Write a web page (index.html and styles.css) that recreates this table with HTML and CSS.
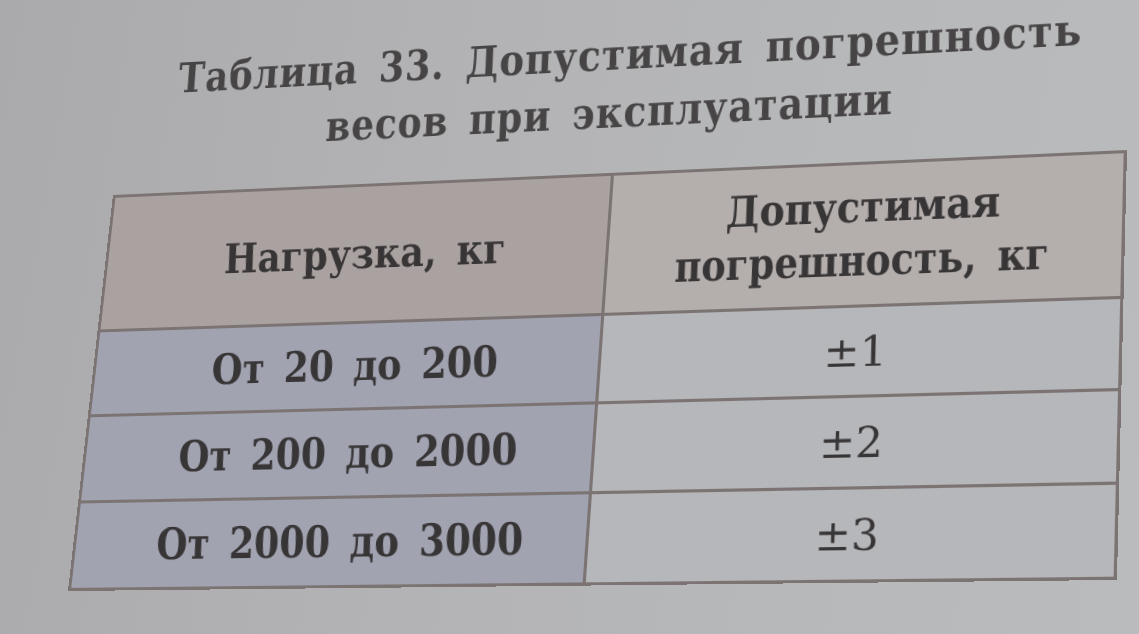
FILE: index.html
```html
<!DOCTYPE html>
<html lang="ru">
<head>
<meta charset="utf-8">
<title>Таблица 33</title>
<link rel="stylesheet" href="styles.css">
</head>
<body>
<div class="sheet">
  <div class="caption">
    <div class="caption-line"><span class="caption-text first">Таблица 33. Допустимая погрешность</span></div>
    <div class="caption-line second"><span class="caption-text">весов при эксплуатации</span></div>
  </div>
  <div class="grid">
    <div class="cell head head-left"><span class="txt">Нагрузка, кг</span></div>
    <div class="cell head head-right"><span class="txt">Допустимая</span><span class="txt tail">погрешность, кг</span></div>
    <div class="cell range"><span class="txt">От 20 до 200</span></div>
    <div class="cell value"><span class="txt">±1</span></div>
    <div class="cell range"><span class="txt">От 200 до 2000</span></div>
    <div class="cell value"><span class="txt">±2</span></div>
    <div class="cell range"><span class="txt">От 2000 до 3000</span></div>
    <div class="cell value"><span class="txt">±3</span></div>
  </div>
</div>
</body>
</html>
```
FILE: styles.css
```css
html, body {
  margin: 0;
  padding: 0;
}
body {
  width: 1139px;
  height: 634px;
  overflow: hidden;
  background: linear-gradient(100deg, #aaaaac 0%, #b2b2b4 35%, #b7b8ba 70%, #babbbd 100%);
  color: #383536;
}
.sheet {
  width: 1000px;
  transform-origin: 0 0;
  transform: matrix3d(0.923904, -0.0569915, 0, -0.000079943, -0.1183015, 0.9395775, 0, -0.0000853175, 0, 0, 1, 0, 133.1113, 35.2718, 0, 1.014504);
}
.caption {
  height: 170px;
  box-sizing: border-box;
  padding-top: 22px;
  font-family: "DejaVu Serif", serif;
  font-weight: bold;
  font-size: 41px;
  line-height: 56px;
  letter-spacing: 1px;
  word-spacing: 8px;
  color: #474445;
}
.caption-line {
  display: flex;
  justify-content: center;
  white-space: nowrap;
}
.caption-line.first-line {
  padding-left: 8px;
}
.caption-line.second {
  padding-top: 3px;
}
.caption-text {
  display: inline-block;
  transform: skewX(2deg) scale(0.9, 1.07);
}
.caption-text.first {
  transform: translateX(6px) skewX(2deg) scale(0.915, 1.07);
}
.grid {
  display: grid;
  grid-template-columns: 509px 482px;
  grid-template-rows: 136px 83px 83px 83px;
  gap: 3px;
  padding: 3px;
  width: 1000px;
  height: 400px;
  box-sizing: border-box;
  background: #7b7473;
  font-family: "DejaVu Serif", serif;
  font-size: 42px;
}
.cell {
  display: flex;
  flex-direction: column;
  align-items: center;
  justify-content: center;
  text-align: center;
  white-space: nowrap;
}
.txt {
  display: inline-block;
}
.head {
  font-weight: bold;
  word-spacing: 8px;
}
.head-left {
  background: #aaa2a0;
  padding-left: 24px;
}
.head-left .txt {
  transform: skewX(4deg) scaleX(0.88);
}
.head-right {
  background: #b4afad;
  line-height: 52px;
}
.head-right .txt {
  transform: skewX(1.3deg) scaleX(0.86);
}
.head-right .txt.tail {
  transform: skewX(1.3deg) scaleX(0.84);
}
.range {
  background: #a1a3b1;
  font-weight: bold;
  word-spacing: 8px;
  padding-left: 24px;
}
.range .txt {
  transform: skewX(3.8deg) scaleX(0.87);
}
.value {
  background: #b6b7ba;
  font-weight: normal;
  font-size: 40px;
}
.value .txt {
  transform: skewX(1.2deg);
}
```
